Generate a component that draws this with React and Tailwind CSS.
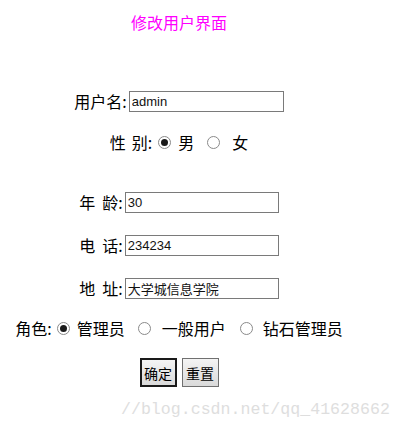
import React from "react";

const cjk = { fontFamily: '"Noto Sans CJK SC", "Microsoft YaHei", sans-serif' };

function Radio({ checked }) {
  return (
    <span className="inline-flex h-[13px] w-[13px] items-center justify-center rounded-full border border-[#8a8a8a] bg-white">
      {checked && <span className="h-[7px] w-[7px] rounded-full bg-[#1a1a1a]" />}
    </span>
  );
}

function Field({ first, second, value }) {
  return (
    <div className="mt-[19px] flex h-[24px] items-center justify-center">
      <span className="text-[16px] leading-none text-black">
        {first}
        <span className="inline-block w-[7px]" />
        {second}:
      </span>
      <input
        readOnly
        value={value}
        className="ml-[2px] h-[21px] w-[154px] border border-[#7a7a7a] bg-white px-[2px] font-['Liberation_Sans',_'Noto_Sans_CJK_SC',_sans-serif] text-[13px] text-[#111] outline-none"
      />
    </div>
  );
}

export default function App() {
  return (
    <div className="relative h-[434px] w-[402px] bg-white" style={cjk}>
      <div className="flex w-[358px] flex-col">
        <div className="mt-[10px] flex h-[24px] items-center justify-center text-[16px] text-[#ff00ff]">
          修改用户界面
        </div>

        <div className="mt-[55px] flex h-[24px] items-center justify-center">
          <span className="text-[16px] leading-none text-black">用户名:</span>
          <input
            readOnly
            value="admin"
            className="ml-[2px] h-[21px] w-[155px] border border-[#7a7a7a] bg-white px-[2px] font-['Liberation_Sans',_sans-serif] text-[13px] text-[#111] outline-none"
          />
        </div>

        <div className="mt-[17px] flex h-[24px] items-center justify-center text-[16px] leading-none text-black">
          <span>
            性<span className="inline-block w-[6px]" />别:
          </span>
          <span className="ml-[6px] flex">
            <Radio checked />
          </span>
          <span className="ml-[7px]">男</span>
          <span className="ml-[13px] flex">
            <Radio />
          </span>
          <span className="ml-[12px]">女</span>
        </div>

        <div className="mt-[17px]" />
        <Field first="年" second="龄" value="30" />
        <Field first="电" second="话" value="234234" />
        <Field first="地" second="址" value="大学城信息学院" />

        <div className="mt-[16px] flex h-[24px] items-center justify-center text-[16px] leading-none text-black">
          <span>角色:</span>
          <span className="ml-[5px] flex">
            <Radio checked />
          </span>
          <span className="ml-[7px]">管理员</span>
          <span className="ml-[13px] flex">
            <Radio />
          </span>
          <span className="ml-[11px]">一般用户</span>
          <span className="ml-[14px] flex">
            <Radio />
          </span>
          <span className="ml-[10px]">钻石管理员</span>
        </div>

        <div className="mt-[18px] flex items-center justify-center gap-[5px]">
          <button className="h-[29px] w-[37px] border-2 border-[#1a1a1a] bg-gradient-to-b from-[#f4f4f4] to-[#dadada] text-[14px] leading-none text-black">
            确定
          </button>
          <button className="h-[29px] w-[37px] border border-[#707070] bg-gradient-to-b from-[#f4f4f4] to-[#dadada] text-[14px] leading-none text-black">
            重置
          </button>
        </div>
      </div>

      <div className="absolute left-[121px] top-[402px] font-['Liberation_Mono',_monospace] text-[16.6px] leading-none text-[#dedede]">
        //blog.csdn.net/qq_41628662
      </div>
    </div>
  );
}
